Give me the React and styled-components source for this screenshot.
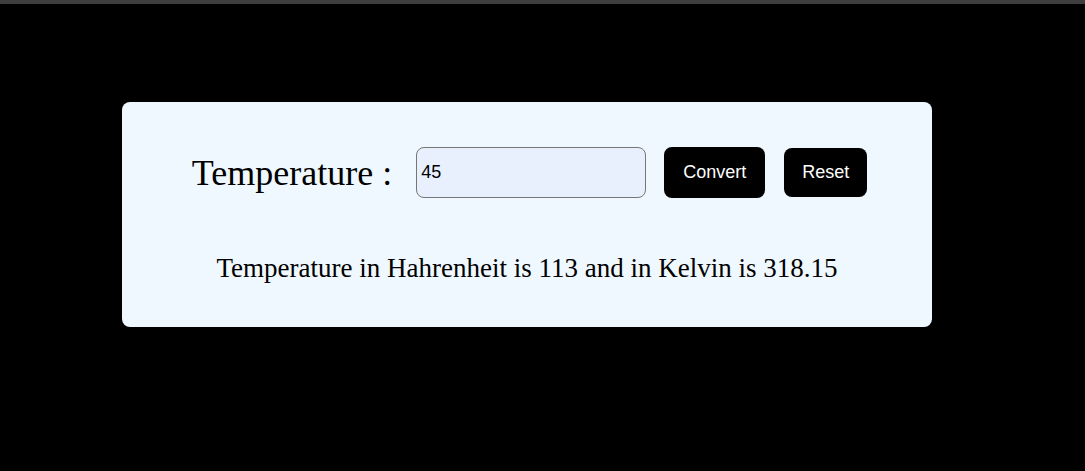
import React, { useState } from 'react';
import styled, { createGlobalStyle } from 'styled-components';

const GlobalStyle = createGlobalStyle`
	body {
		margin: 0;
		background: #000;
		font-family: 'Liberation Serif', 'Times New Roman', serif;
	}
`;

const Page = styled.div`
	min-height: 471px;
	border-top: 4px solid #3e3e3e;
	box-sizing: border-box;
	padding: 98px 0 0 122px;
`;

const Card = styled.div`
	width: 810px;
	height: 225px;
	box-sizing: border-box;
	background: #f0f8ff;
	border-radius: 8px;
	padding-top: 45px;
	display: flex;
	flex-direction: column;
	align-items: center;
`;

const Row = styled.div`
	display: flex;
	align-items: center;
	margin-left: 5px;
`;

const Label = styled.label`
	font-size: 36px;
	color: #000;
	margin-right: 24px;
`;

const Input = styled.input`
	width: 230px;
	height: 51px;
	box-sizing: border-box;
	border: 1px solid #767676;
	border-radius: 8px;
	background: #e8f0fe;
	padding: 0 4px;
	font-family: 'Liberation Sans', Arial, sans-serif;
	font-size: 18px;
	color: #000;
	outline: none;
`;

const Button = styled.button`
	height: ${(p) => p.$h}px;
	margin-left: ${(p) => p.$gap}px;
	padding: 0 ${(p) => p.$pad}px;
	border: none;
	border-radius: 8px;
	background: #000;
	color: #fff;
	font-family: 'Liberation Sans', Arial, sans-serif;
	font-size: 18px;
	cursor: pointer;
`;

const Result = styled.p`
	margin: 55px 0 0;
	font-size: 27px;
	color: #000;
`;

const App = () => {
	const [value, setValue] = useState('45');
	const [result, setResult] = useState({ f: 113, k: 318.15 });

	const convert = () => {
		const c = parseFloat(value);
		if (isNaN(c)) return;
		setResult({ f: +(c * 9 / 5 + 32).toFixed(2), k: +(c + 273.15).toFixed(2) });
	};

	const reset = () => {
		setValue('');
		setResult(null);
	};

	return (
		<>
			<GlobalStyle />
			<Page>
				<Card>
					<Row>
						<Label>Temperature :</Label>
						<Input value={value} onChange={(e) => setValue(e.target.value)} />
						<Button $h={51} $gap={18} $pad={19} onClick={convert}>Convert</Button>
						<Button $h={49} $gap={19} $pad={18} onClick={reset}>Reset</Button>
					</Row>
					{result && (
						<Result>
							Temperature in Hahrenheit is {result.f} and in Kelvin is {result.k}
						</Result>
					)}
				</Card>
			</Page>
		</>
	);
};

export default App;
